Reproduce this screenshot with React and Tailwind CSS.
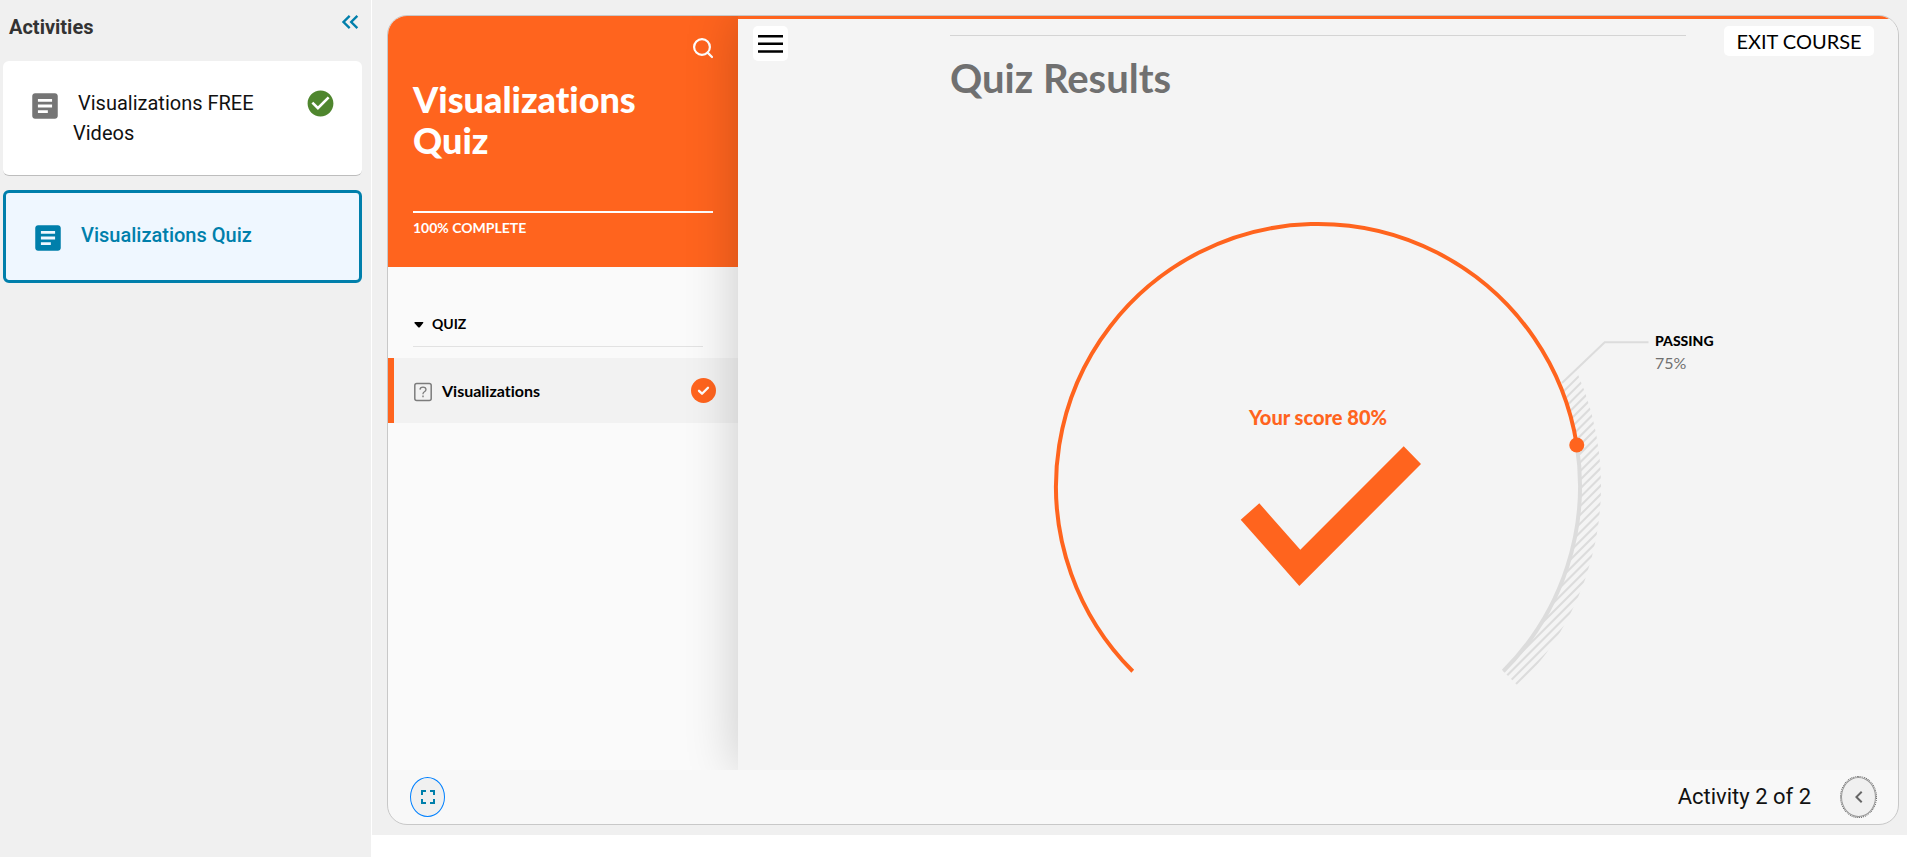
import React from "react";
import {
  MdArticle,
  MdCheckCircle,
  MdChevronLeft,
  MdFullscreen,
  MdKeyboardDoubleArrowLeft,
} from "react-icons/md";

const CX = 368;
const CY = 286;
const RADIUS = 262;
const OUTER = 283;

// Angles are in degrees, clockwise from three o'clock.
function pointAt(angle, radius) {
  const rad = (angle * Math.PI) / 180;
  return [CX + radius * Math.cos(rad), CY + radius * Math.sin(rad)];
}

// The dial starts at 135 degrees and sweeps through 270.
function angleOf(percent) {
  return 135 + percent * 2.7;
}

function arc(from, to, radius) {
  const [x1, y1] = pointAt(from, radius);
  const [x2, y2] = pointAt(to, radius);
  return `M${x1} ${y1}A${radius} ${radius} 0 ${to - from > 180 ? 1 : 0} 1 ${x2} ${y2}`;
}

function ringSector(from, to) {
  const [x1, y1] = pointAt(to, RADIUS);
  const [x2, y2] = pointAt(from, RADIUS);
  const [x3, y3] = pointAt(to, OUTER);
  return `${arc(from, to, OUTER)}L${x3} ${y3}L${x1} ${y1}A${RADIUS} ${RADIUS} 0 0 0 ${x2} ${y2}Z`;
}

function ScoreDial({ score, passing }) {
  const [dotX, dotY] = pointAt(angleOf(score), RADIUS);
  const hatches = Array.from({ length: 29 }, (_, i) => 1050 - i * 8.75);
  return (
    <svg
      viewBox="0 0 736 500"
      className="block w-full overflow-visible"
      role="img"
      aria-label="Quiz score"
    >
      <clipPath id="passing-zone">
        <path d={ringSector(angleOf(passing) - 1, angleOf(100))} />
      </clipPath>
      <g clipPath="url(#passing-zone)" stroke="#dcdcdc" strokeWidth="2">
        {hatches.map((sum) => (
          <line key={sum} x1={500} y1={sum - 500} x2={700} y2={sum - 700} />
        ))}
      </g>
      <path
        d={arc(angleOf(score), angleOf(100), RADIUS)}
        fill="none"
        stroke="#dcdcdc"
        strokeWidth="4"
      />
      <polyline
        points="612,183 654.7,142.3 698.5,142.3"
        fill="none"
        stroke="#dcdcdc"
        strokeWidth="2"
      />
      <path
        d={arc(angleOf(0), angleOf(score), RADIUS)}
        fill="none"
        stroke="#ff641e"
        strokeWidth="4"
      />
      <circle cx={dotX} cy={dotY} r="7.5" fill="#ff641e" />
      <polygon
        points="290.7,319.7 309.3,303.3 350.3,349.7 453.7,246.3 471,264 349.3,386"
        fill="#ff641e"
      />
      <text x="368" y="225" textAnchor="middle" className="fill-[#ff641e] text-[20px] font-black">
        Your score {score}%
      </text>
      <text x="705" y="146" className="fill-black text-[14px] font-black">
        PASSING
      </text>
      <text x="705" y="169" className="fill-[#707070] text-[16px]">
        {passing}%
      </text>
    </svg>
  );
}

function Activities() {
  return (
    <aside className="w-[372px] shrink-0 border-r border-white bg-[#f0f0f0] pl-[3px] pr-[9px] font-[Roboto,sans-serif] text-[20px] leading-[30px]">
      <div className="flex h-[61px] items-start justify-between">
        <h2 className="pl-[6px] pt-[12px] font-bold text-[#333]">Activities</h2>
        <button aria-label="Collapse activities" className="-mr-[2px] mt-[8px] text-[#007fab]">
          <MdKeyboardDoubleArrowLeft size={28} />
        </button>
      </div>
      <ul className="flex flex-col gap-[14px]">
        <li>
          <a
            href="#videos"
            className="flex h-[115px] items-start rounded-md border-b border-[#bdbdbd] bg-white pl-[25px] pr-[26px] pt-[27px] text-[#111]"
          >
            <MdArticle size={34} className="mt-[1px] shrink-0 text-[#757575]" />
            <span className="ml-[11px] flex-1 pr-[40px] indent-[5px]">Visualizations FREE Videos</span>
            <MdCheckCircle size={31} className="shrink-0 text-[#4f862e]" />
          </a>
        </li>
        <li>
          <a
            href="#quiz"
            aria-current="page"
            className="flex h-[93px] items-start rounded-md border-[3px] border-[#007fab] bg-[#eff7ff] pl-[25px] pt-[27px] font-medium text-[#007fab]"
          >
            <MdArticle size={34} className="mt-[1px] shrink-0" />
            <span className="ml-[16px]">Visualizations Quiz</span>
          </a>
        </li>
      </ul>
    </aside>
  );
}

function CourseNav() {
  return (
    <nav className="w-[350px] shrink-0 bg-[#fafafa]">
      <header className="flex h-[251px] flex-col bg-[#ff641e] px-[25px] pt-[21px] text-white">
        <button aria-label="Search" className="self-end">
          <svg width="20" height="22" viewBox="0 0 20 22" fill="none" stroke="currentColor" strokeWidth="2.2">
            <circle cx="9" cy="10" r="7.9" />
            <path d="M14.600 15.600L19 20" strokeLinecap="round" />
          </svg>
        </button>
        <h1 className="mt-[20px] text-[36px] font-black leading-[41px]">
          Visualizations
          <br />
          Quiz
        </h1>
        <div className="mt-[50px] h-[2px] bg-white" />
        <p className="mt-[5px] text-[14px] font-bold leading-[20px]">100% COMPLETE</p>
      </header>
      <div className="pt-[41px]">
        <button className="ml-[25px] flex h-[39px] w-[290px] items-start gap-[8px] border-b border-[#e2e2e2] pt-[6px] text-[14px] font-bold leading-[20px] text-black">
          <svg width="10" height="20" viewBox="0 0 10 20" className="ml-[1px]" aria-hidden="true">
            <path d="M1 8h8q.6.4.2 1L5.800 13.200q-.8.8-1.600 0L.4 9Q.1 8.300 1 8Z" fill="black" />
          </svg>
          QUIZ
        </button>
        <a
          href="#visualizations"
          className="mt-[11px] flex h-[65px] items-center border-l-[6px] border-[#ff641e] bg-[#f2f2f2] pl-[20px] pr-[22px] text-[16px] font-bold text-black"
        >
          <svg width="18" height="20" viewBox="0 0 18 20" fill="none" stroke="#7c7c7c" className="mt-[3px]">
            <rect x=".8" y="1.500" width="16.400" height="17" rx="2" strokeWidth="1.500" />
            <path d="M6 7.600q.1-2.500 3-2.500t3 2.500c0 1.600-1.500 1.900-2.400 2.800Q9 11 9 12.300" strokeWidth="1.300" />
            <path d="M9 13.600v1.600" strokeWidth="1.400" />
          </svg>
          <span className="ml-[10px] flex-1">Visualizations</span>
          <svg width="25" height="25" viewBox="0 0 25 25" aria-label="Completed" role="img">
            <circle cx="12.500" cy="12.500" r="12.500" fill="#ff641e" />
            <path
              d="M8 12.800l3 2.900 6-6"
              fill="none"
              stroke="white"
              strokeWidth="2.300"
              strokeLinecap="round"
              strokeLinejoin="round"
            />
          </svg>
        </a>
      </div>
    </nav>
  );
}

function QuizResults() {
  return (
    <section className="relative min-w-0 flex-1 border-t-[3px] border-[#ff641e] bg-[#f4f4f4] shadow-[0_0_50px_rgba(0,0,0,0.2)]">
      <button
        aria-label="Toggle menu"
        className="absolute left-[15px] top-[7px] flex h-[35px] w-[35px] items-center justify-center rounded-[5px] bg-white"
      >
        <svg width="25" height="18" viewBox="0 0 25 18" stroke="black" strokeWidth="2.500">
          <path d="M0 1.300h25M0 8.800h25M0 16.400h25" />
        </svg>
      </button>
      <button className="absolute right-[24px] top-[7px] h-[30px] w-[150px] rounded-[5px] bg-white text-[20px] leading-[30px] text-black">
        EXIT COURSE
      </button>
      <div className="mx-auto mt-[16px] max-w-[736px] border-t border-[#d4d4d4]">
        <h2 className="pt-[17px] text-[40px] font-bold leading-[50px] text-[#707070]">Quiz Results</h2>
        <div className="mt-[97px]">
          <ScoreDial score={80} passing={75} />
        </div>
      </div>
    </section>
  );
}

export default function App() {
  return (
    <div className="flex min-h-screen bg-white">
      <Activities />
      <main className="flex min-w-0 flex-1 flex-col pb-[22px]">
        <div className="flex flex-1 flex-col bg-[#f0f0f0] pb-[10px] pl-[15px] pr-[8px] pt-[15px]">
          <div className="flex flex-1 flex-col overflow-hidden rounded-[20px] border border-[#c8c8c8] bg-[#f8f8f8]">
            <div className="flex flex-1 overflow-hidden font-[Lato,sans-serif] [font-variant-ligatures:none]">
              <CourseNav />
              <QuizResults />
            </div>
            <footer className="flex h-[54px] items-center justify-between px-[22px] font-[Roboto,sans-serif]">
              <button
                aria-label="Full screen"
                className="flex h-[40px] w-[35px] items-center justify-center rounded-[50%] border border-[#0080ff] bg-[#f0f0f0] text-[#007fab]"
              >
                <MdFullscreen size={24} />
              </button>
              <div className="flex items-center gap-[30px]">
                <span className="text-[22px] leading-[30px] text-[#111]">Activity 2 of 2</span>
                <button
                  aria-label="Previous activity"
                  className="flex h-[40px] w-[35px] items-center justify-center rounded-[50%] border border-[#999] bg-[#f0f0f0] text-[#666] outline-1 outline-dotted outline-[#555]"
                >
                  <MdChevronLeft size={24} />
                </button>
              </div>
            </footer>
          </div>
        </div>
      </main>
    </div>
  );
}
